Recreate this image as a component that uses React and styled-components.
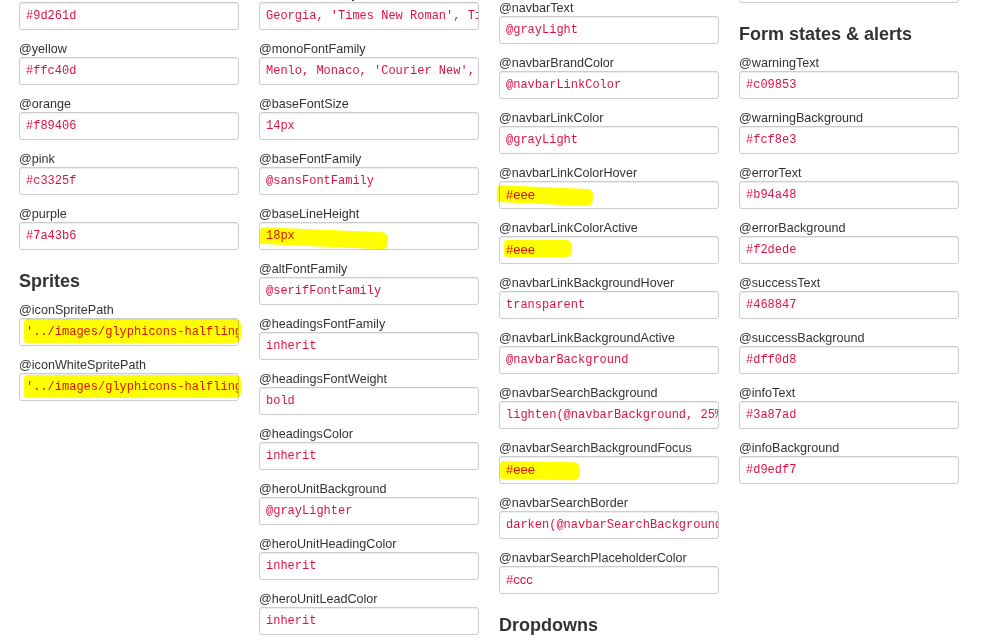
import React from "react";
import styled, { createGlobalStyle } from "styled-components";

const Global = createGlobalStyle`
  html, body { margin: 0; padding: 0; background: #fff; overflow: hidden; }
  body { font-family: "Liberation Sans", Arial, Helvetica, sans-serif; font-size: 13px; line-height: 18px; color: #333; }
`;

const Page = styled.div`
  display: flex;
  align-items: flex-start;
  gap: 20px;
  padding-left: 19px;
  height: 644px;
  overflow: hidden;
`;

const Column = styled.div`
  width: 220px;
  display: flex;
  flex-direction: column;
  margin-top: ${(p) => p.$offset}px;
`;

const SectionTitle = styled.h3`
  margin: 9px 0 5px;
  font-size: 18px;
  line-height: 27px;
  font-weight: bold;
  color: #333;
`;

const Label = styled.label`
  display: block;
  box-sizing: border-box;
  height: 18px;
  padding-top: 1px;
  line-height: 18px;
  font-size: 12.6px;
  color: #333;
  white-space: nowrap;
`;

const FieldWrap = styled.div`
  position: relative;
  margin-bottom: 9px;
`;

const Field = styled.div`
  box-sizing: border-box;
  height: 28px;
  width: 220px;
  padding: 4px 1px 4px 6px;
  border: 1px solid #ccc;
  border-radius: 3px;
  box-shadow: inset 0 1px 1px rgba(0, 0, 0, 0.075);
  background: #fff;
  overflow: hidden;
  white-space: nowrap;
  color: #d14;
  font-family: ${(p) =>
    p.$sans
      ? `"Liberation Sans", Arial, sans-serif`
      : `"Liberation Mono", "Courier New", monospace`};
  font-size: ${(p) => (p.$sans ? "13px" : "12px")};
  line-height: 18px;
`;

const Highlight = styled.span`
  position: absolute;
  left: ${(p) => p.$l}px;
  top: ${(p) => p.$t}px;
  width: ${(p) => p.$w}px;
  height: ${(p) => p.$h}px;
  background: #ffff00;
  mix-blend-mode: multiply;
  border-radius: 4px 6px 6px 3px;
  transform: rotate(${(p) => p.$r}deg);
  transform-origin: left center;
  pointer-events: none;
`;

const columns = [
  {
    offset: -16,
    items: [
      { label: "@red", value: "#9d261d" },
      { label: "@yellow", value: "#ffc40d" },
      { label: "@orange", value: "#f89406" },
      { label: "@pink", value: "#c3325f" },
      { label: "@purple", value: "#7a43b6" },
      { heading: "Sprites" },
      {
        label: "@iconSpritePath",
        value: "'../images/glyphicons-halflings.png'",
        hl: { l: 5, t: 1, w: 217, h: 24, r: 0 },
      },
      {
        label: "@iconWhiteSpritePath",
        value: "'../images/glyphicons-halflings-white.png'",
        hl: { l: 5, t: 2, w: 217, h: 23, r: 0 },
      },
    ],
  },
  {
    offset: -16,
    items: [
      { label: "@serifFontFamily", value: "Georgia, 'Times New Roman', Times, serif" },
      { label: "@monoFontFamily", value: "Menlo, Monaco, 'Courier New', monospace" },
      { label: "@baseFontSize", value: "14px" },
      { label: "@baseFontFamily", value: "@sansFontFamily" },
      { label: "@baseLineHeight", value: "18px", hl: { l: 1, t: 5, w: 128, h: 17, r: 2.5 } },
      { label: "@altFontFamily", value: "@serifFontFamily" },
      { label: "@headingsFontFamily", value: "inherit" },
      { label: "@headingsFontWeight", value: "bold" },
      { label: "@headingsColor", value: "inherit" },
      { label: "@heroUnitBackground", value: "@grayLighter" },
      { label: "@heroUnitHeadingColor", value: "inherit" },
      { label: "@heroUnitLeadColor", value: "inherit" },
    ],
  },
  {
    offset: -2,
    items: [
      { label: "@navbarText", value: "@grayLight" },
      { label: "@navbarBrandColor", value: "@navbarLinkColor" },
      { label: "@navbarLinkColor", value: "@grayLight" },
      { label: "@navbarLinkColorHover", value: "#eee", sans: true, hl: { l: -2, t: 4, w: 96, h: 17, r: 2.5 } },
      { label: "@navbarLinkColorActive", value: "#eee", sans: true, hl: { l: 5, t: 4, w: 68, h: 17, r: 0 } },
      { label: "@navbarLinkBackgroundHover", value: "transparent" },
      { label: "@navbarLinkBackgroundActive", value: "@navbarBackground" },
      { label: "@navbarSearchBackground", value: "lighten(@navbarBackground, 25%)" },
      { label: "@navbarSearchBackgroundFocus", value: "#eee", sans: true, hl: { l: 1, t: 5, w: 80, h: 18, r: 1 } },
      { label: "@navbarSearchBorder", value: "darken(@navbarSearchBackground, 30%)" },
      { label: "@navbarSearchPlaceholderColor", value: "#ccc", sans: true },
      { heading: "Dropdowns" },
    ],
  },
  {
    offset: -43,
    items: [
      { label: "@inputBorder", value: "#ccc" },
      { heading: "Form states & alerts" },
      { label: "@warningText", value: "#c09853" },
      { label: "@warningBackground", value: "#fcf8e3" },
      { label: "@errorText", value: "#b94a48" },
      { label: "@errorBackground", value: "#f2dede" },
      { label: "@successText", value: "#468847" },
      { label: "@successBackground", value: "#dff0d8" },
      { label: "@infoText", value: "#3a87ad" },
      { label: "@infoBackground", value: "#d9edf7" },
    ],
  },
];

function Item({ item }) {
  if (item.heading) return <SectionTitle>{item.heading}</SectionTitle>;
  return (
    <>
      <Label>{item.label}</Label>
      <FieldWrap>
        <Field $sans={item.sans}>{item.value}</Field>
        {item.hl && (
          <Highlight $l={item.hl.l} $t={item.hl.t} $w={item.hl.w} $h={item.hl.h} $r={item.hl.r} />
        )}
      </FieldWrap>
    </>
  );
}

export default function App() {
  return (
    <>
      <Global />
      <Page>
        {columns.map((col, i) => (
          <Column key={i} $offset={col.offset}>
            {col.items.map((it, j) => (
              <Item key={j} item={it} />
            ))}
          </Column>
        ))}
      </Page>
    </>
  );
}
